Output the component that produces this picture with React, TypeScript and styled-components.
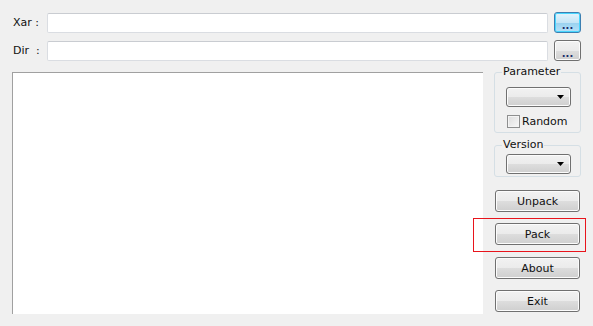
import React from "react";
import styled, { createGlobalStyle } from "styled-components";

const Global = createGlobalStyle`
  html, body { margin: 0; padding: 0; background: #f0f0f0; }
  body { font-family: "DejaVu Sans", Tahoma, sans-serif; font-size: 11px; color: #000; }
`;

const Window = styled.div`
  width: 593px;
  height: 326px;
  box-sizing: border-box;
  padding: 12px 12px 0 12px;
  background: #f0f0f0;
  display: flex;
  flex-direction: column;
  overflow: hidden;
`;

const PathRow = styled.div<{ $top?: number }>`
  display: flex;
  align-items: center;
  height: 21px;
  margin-top: ${(p) => p.$top ?? 0}px;
`;

const Label = styled.div`
  width: 35px;
  box-sizing: border-box;
  padding-left: 1px;
  white-space: pre;
  line-height: 14px;
  color: #111;
`;

const TextBox = styled.input`
  flex: 1;
  height: 20px;
  box-sizing: border-box;
  margin: 0 6px 0 0;
  padding: 0 3px;
  border: 1px solid #dadde2;
  border-top-color: #c9ccd1;
  border-radius: 2px;
  background: #fff;
  font: inherit;
  outline: none;
`;

const BrowseButton = styled.button<{ $focused?: boolean }>`
  width: 27px;
  height: 21px;
  box-sizing: border-box;
  margin: 0;
  padding: 6px 0 0 0;
  border: 1px solid ${(p) => (p.$focused ? "#3c7fb1" : "#707070")};
  border-radius: 3px;
  background: ${(p) =>
    p.$focused
      ? "linear-gradient(#e5f4fc 0%, #c4e5f6 50%, #98d1ef 51%, #b6e1f8 100%)"
      : "linear-gradient(#f2f2f2 0%, #ebebeb 50%, #dddddd 51%, #cfcfcf 100%)"};
  box-shadow: inset 0 0 0 1px ${(p) => (p.$focused ? "#48d6fe" : "#fcfcfc")};
  color: #1b2d6b;
  font-family: "DejaVu Sans", sans-serif;
  font-weight: bold;
  font-size: 10px;
  line-height: 10px;
`;

const Main = styled.div`
  display: flex;
  align-items: flex-start;
  margin-top: 11px;
`;

const ListBox = styled.div`
  width: 471px;
  height: 242px;
  box-sizing: border-box;
  background: #fff;
  border-left: 1px solid #a0a0a0;
  border-top: 1px solid #a0a0a0;
`;

const Side = styled.div`
  margin-left: 11px;
  width: 87px;
  display: flex;
  flex-direction: column;
`;

const GroupBox = styled.div<{ $top: number; $padTop: number; $padBottom: number }>`
  position: relative;
  margin-top: ${(p) => p.$top}px;
  padding: ${(p) => p.$padTop}px 9px ${(p) => p.$padBottom}px 11px;
  border: 1px solid #d5dfe5;
  border-radius: 3px;
`;

const GroupTitle = styled.span`
  position: absolute;
  left: 7px;
  top: -8px;
  padding: 0 1px;
  line-height: 14px;
  background: #f0f0f0;
  color: #111;
`;

const Combo = styled.div<{ $top?: number }>`
  width: 65px;
  height: 20px;
  margin-top: ${(p) => p.$top ?? 0}px;
  box-sizing: border-box;
  border: 1px solid #707070;
  border-radius: 3px;
  background: linear-gradient(#f2f2f2 0%, #ebebeb 50%, #dddddd 51%, #cfcfcf 100%);
  box-shadow: inset 0 0 0 1px #fcfcfc;
  display: flex;
  align-items: center;
  justify-content: flex-end;
  padding-right: 6px;
`;

const Arrow = styled.svg`
  width: 7px;
  height: 4px;
  display: block;
`;

const CheckRow = styled.label`
  display: flex;
  align-items: center;
  margin-top: 8px;
  height: 13px;
`;

const CheckBox = styled.span`
  width: 13px;
  height: 13px;
  box-sizing: border-box;
  margin-left: 1px;
  border: 1px solid #8e8f8f;
  background: linear-gradient(135deg, #dcdcdc, #f8f8f8);
  box-shadow: inset 0 0 0 1px #f4f4f4;
`;

const CheckText = styled.span`
  margin-left: 2px;
  line-height: 13px;
  color: #111;
`;

const ActionWrap = styled.div<{ $top: number }>`
  position: relative;
  margin-top: ${(p) => p.$top}px;
  margin-left: 1px;
`;

const ActionButton = styled.button`
  width: 85px;
  height: 22px;
  box-sizing: border-box;
  margin: 0;
  padding: 0;
  border: 1px solid #707070;
  border-radius: 3px;
  background: linear-gradient(#f2f2f2 0%, #ebebeb 50%, #dddddd 51%, #cfcfcf 100%);
  box-shadow: inset 0 0 0 1px #fcfcfc;
  font-family: "DejaVu Sans", sans-serif;
  font-size: 11px;
  color: #111;
  display: block;
`;

const Highlight = styled.div`
  position: absolute;
  left: -22px;
  top: -5px;
  width: 113px;
  height: 34px;
  box-sizing: border-box;
  border: 1px solid #e8141c;
  pointer-events: none;
`;

const DownArrow = () => (
  <Arrow viewBox="0 0 7 4">
    <path d="M0 0 H7 L3.5 4 Z" fill="#000" />
  </Arrow>
);

export default function App() {
  return (
    <>
      <Global />
      <Window>
        <PathRow>
          <Label>Xar :</Label>
          <TextBox />
          <BrowseButton $focused>...</BrowseButton>
        </PathRow>
        <PathRow $top={7}>
          <Label>{"Dir  :"}</Label>
          <TextBox />
          <BrowseButton>...</BrowseButton>
        </PathRow>
        <Main>
          <ListBox />
          <Side>
            <GroupBox $top={0} $padTop={14} $padBottom={4}>
              <GroupTitle>Parameter</GroupTitle>
              <Combo>
                <DownArrow />
              </Combo>
              <CheckRow>
                <CheckBox />
                <CheckText>Random</CheckText>
              </CheckRow>
            </GroupBox>
            <GroupBox $top={12} $padTop={8} $padBottom={2}>
              <GroupTitle>Version</GroupTitle>
              <Combo>
                <DownArrow />
              </Combo>
            </GroupBox>
            <ActionWrap $top={13}>
              <ActionButton>Unpack</ActionButton>
            </ActionWrap>
            <ActionWrap $top={11}>
              <ActionButton>Pack</ActionButton>
              <Highlight />
            </ActionWrap>
            <ActionWrap $top={12}>
              <ActionButton>About</ActionButton>
            </ActionWrap>
            <ActionWrap $top={11}>
              <ActionButton>Exit</ActionButton>
            </ActionWrap>
          </Side>
        </Main>
      </Window>
    </>
  );
}
